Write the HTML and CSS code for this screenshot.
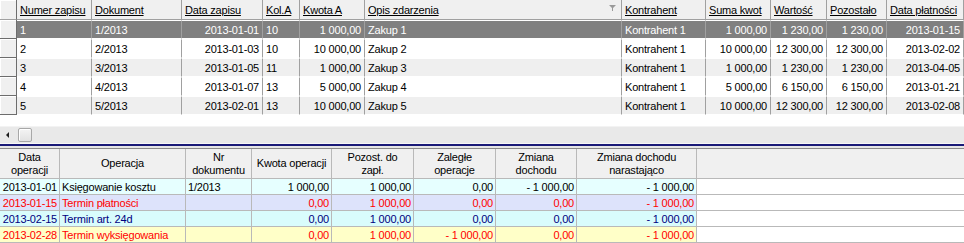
FILE: index.html
```html
<!DOCTYPE html>
<html lang="pl">
<head>
  <meta charset="UTF-8">
  <title>Zapisy</title>
  <link rel="stylesheet" href="styles.css">
</head>
<body>
  <!-- Lista zapisow -->
  <div class="records">
    <div class="records-grid">
      <table class="grid">
        <colgroup>
          <col style="width:17px"><col style="width:75px"><col style="width:90px"><col style="width:81px">
          <col style="width:37px"><col style="width:65px"><col style="width:257px"><col style="width:84px">
          <col style="width:65px"><col style="width:56px"><col style="width:60px"><col style="width:77px">
        </colgroup>
        <thead>
          <tr>
            <th class="ind"></th>
            <th><u>Numer zapisu</u></th>
            <th><u>Dokument</u></th>
            <th><u>Data zapisu</u></th>
            <th><u>Kol.A</u></th>
            <th><u>Kwota A</u></th>
            <th class="filtered">
              <u>Opis zdarzenia</u>
              <svg class="funnel" width="7" height="6" viewBox="0 0 7 6"><path d="M0 0h7L4 3v3H3V3z" fill="#9a9a9a"/></svg>
            </th>
            <th><u>Kontrahent</u></th>
            <th><u>Suma kwot</u></th>
            <th><u>Wartość</u></th>
            <th><u>Pozostało</u></th>
            <th><u>Data płatności</u></th>
          </tr>
        </thead>
        <tbody>
          <tr class="selected">
            <td class="ind"></td><td>1</td><td>1/2013</td><td class="num">2013-01-01</td><td>10</td><td class="num">1 000,00</td><td>Zakup 1</td><td>Kontrahent 1</td><td class="num">1 000,00</td><td class="num">1 230,00</td><td class="num">1 230,00</td><td class="num">2013-01-15</td>
          </tr>
          <tr>
            <td class="ind"></td><td>2</td><td>2/2013</td><td class="num">2013-01-03</td><td>10</td><td class="num">10 000,00</td><td>Zakup 2</td><td>Kontrahent 1</td><td class="num">10 000,00</td><td class="num">12 300,00</td><td class="num">12 300,00</td><td class="num">2013-02-02</td>
          </tr>
          <tr class="alt">
            <td class="ind"></td><td>3</td><td>3/2013</td><td class="num">2013-01-05</td><td>11</td><td class="num">1 000,00</td><td>Zakup 3</td><td>Kontrahent 1</td><td class="num">1 000,00</td><td class="num">1 230,00</td><td class="num">1 230,00</td><td class="num">2013-04-05</td>
          </tr>
          <tr>
            <td class="ind"></td><td>4</td><td>4/2013</td><td class="num">2013-01-07</td><td>13</td><td class="num">5 000,00</td><td>Zakup 4</td><td>Kontrahent 1</td><td class="num">5 000,00</td><td class="num">6 150,00</td><td class="num">6 150,00</td><td class="num">2013-01-21</td>
          </tr>
          <tr class="alt">
            <td class="ind"></td><td>5</td><td>5/2013</td><td class="num">2013-02-01</td><td>13</td><td class="num">10 000,00</td><td>Zakup 5</td><td>Kontrahent 1</td><td class="num">10 000,00</td><td class="num">12 300,00</td><td class="num">12 300,00</td><td class="num">2013-02-08</td>
          </tr>
        </tbody>
      </table>
    </div>
    <div class="hscroll">
      <span class="arrow-left"></span>
      <span class="thumb"></span>
    </div>
  </div>

  <div class="splitter"></div>

  <!-- Operacje dla zapisu -->
  <table class="ops">
    <colgroup>
      <col style="width:60px"><col style="width:126px"><col style="width:66px"><col style="width:80px">
      <col style="width:82px"><col style="width:82px"><col style="width:81px"><col style="width:120px"><col>
    </colgroup>
    <thead>
      <tr>
        <th>Data<br>operacji</th>
        <th>Operacja</th>
        <th>Nr<br>dokumentu</th>
        <th>Kwota operacji</th>
        <th>Pozost. do<br>zapł.</th>
        <th>Zaległe<br>operacje</th>
        <th>Zmiana<br>dochodu</th>
        <th>Zmiana dochodu<br>narastająco</th>
        <th class="rest"></th>
      </tr>
    </thead>
    <tbody>
      <tr class="op-cost">
        <td class="num">2013-01-01</td><td>Księgowanie kosztu</td><td>1/2013</td><td class="num">1 000,00</td><td class="num">1 000,00</td><td class="num">0,00</td><td class="num">- 1 000,00</td><td class="num">- 1 000,00</td><td class="rest"></td>
      </tr>
      <tr class="op-payment">
        <td class="num">2013-01-15</td><td>Termin płatności</td><td></td><td class="num">0,00</td><td class="num">1 000,00</td><td class="num">0,00</td><td class="num">0,00</td><td class="num">- 1 000,00</td><td class="rest"></td>
      </tr>
      <tr class="op-art">
        <td class="num">2013-02-15</td><td>Termin art. 24d</td><td></td><td class="num">0,00</td><td class="num">1 000,00</td><td class="num">0,00</td><td class="num">0,00</td><td class="num">- 1 000,00</td><td class="rest"></td>
      </tr>
      <tr class="op-writeoff">
        <td class="num">2013-02-28</td><td>Termin wyksięgowania</td><td></td><td class="num">0,00</td><td class="num">1 000,00</td><td class="num">- 1 000,00</td><td class="num">0,00</td><td class="num">- 1 000,00</td><td class="rest"></td>
      </tr>
    </tbody>
  </table>
</body>
</html>
```

FILE: styles.css
```css
/* Basic styling */
body {
  margin: 0;
  width: 964px;
  height: 243px;
  overflow: hidden;
  background: #ffffff;
  font-family: "Liberation Sans", Arial, sans-serif;
  font-size: 11px;
  letter-spacing: -0.2px;
  color: #000000;
}

table {
  border-spacing: 0;
  table-layout: fixed;
}

th,
td {
  padding: 0 3px;
  white-space: nowrap;
  overflow: hidden;
  font-weight: normal;
}

/* Top grid */
.records-grid {
  height: 126px;
  overflow: hidden;
  background: #ffffff;
}

.grid {
  width: 964px;
}

.grid th {
  height: 19px;
  text-align: left;
  background: #f0f0f0;
  border-right: 1px solid #a0a0a0;
  border-bottom: 1px solid #a0a0a0;
}

.grid th u {
  text-underline-offset: 1px;
}

.grid td {
  height: 17px;
  border-top: 1px solid #ffffff;
  border-bottom: 1px solid #ffffff;
  border-right: 1px solid #a0a0a0;
}

.grid .ind {
  padding: 0;
  background: #f0f0f0;
  border-right: 1px solid #6d6d6d;
  box-shadow: inset 1px 1px 0 #ffffff;
}

.grid td.ind {
  border-top: none;
  border-bottom: 1px solid #6d6d6d;
  height: 18px;
}

.grid .num {
  text-align: right;
}

.grid tr.alt td {
  background: #efefef;
}

.grid tr.selected td {
  background: #808080;
  color: #ffffff;
}

.grid tr.selected td.ind,
.grid tr.alt td.ind {
  background: #f0f0f0;
}

.filtered .funnel {
  float: right;
  margin-top: 1px;
  margin-right: 2px;
}

/* Horizontal scroll bar */
.hscroll {
  height: 16px;
  background: #e9e9e9;
  border-top: 1px solid #f3f3f3;
  border-bottom: 1px solid #f7f7f7;
  display: flex;
  align-items: center;
}

.arrow-left {
  width: 0;
  height: 0;
  margin-left: 6px;
  border-top: 3px solid transparent;
  border-bottom: 3px solid transparent;
  border-right: 3px solid #1e1e1e;
}

.thumb {
  width: 12px;
  height: 12px;
  margin-left: 9px;
  border: 1px solid #a8a8a8;
  border-radius: 2px;
  background: linear-gradient(#f4f4f4, #e2e2e2);
  box-shadow: inset 1px 1px 0 #ffffff;
}

/* Split line between panels */
.splitter {
  height: 2px;
  background: #1a1a78;
  border-bottom: 1px solid #e6e6e6;
  box-shadow: 0 1px 0 #e6e6e6, 0 2px 0 #8a8a8a;
  margin-bottom: 2px;
}

/* Bottom grid */
.ops {
  width: 964px;
}

.ops th {
  height: 29px;
  padding: 0 2px;
  text-align: center;
  line-height: 13px;
  background: #f0f0f0;
  border-right: 1px solid #b9b9b9;
  border-bottom: 1px solid #b9b9b9;
}

.ops td {
  height: 15px;
  padding: 0 2px;
  border-right: 1px solid #b9b9b9;
  border-bottom: 1px solid #b9b9b9;
}

.ops .num {
  text-align: right;
}

.ops .rest {
  border-right: none;
  background: #ffffff;
}

.ops th.rest {
  background: #f0f0f0;
}

.op-cost td {
  background: #e6ffff;
}

.op-payment td {
  background: #dde3fb;
  color: #ff0000;
}

.op-art td {
  background: #d9fcfc;
  color: #000080;
}

.op-writeoff td {
  background: #ffffc8;
  color: #ff0000;
}
```
